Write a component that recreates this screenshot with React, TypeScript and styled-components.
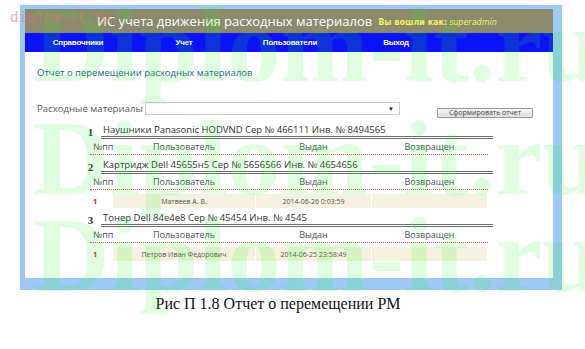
import React from 'react';
import styled, { createGlobalStyle } from 'styled-components';

const GlobalStyle = createGlobalStyle`
  html, body {
    margin: 0;
    padding: 0;
    background: #fff;
    overflow: hidden;
  }
  body {
    font-family: "Open Sans", "Liberation Sans", sans-serif;
  }
`;

const Page = styled.div`
  position: relative;
  width: 585px;
  height: 349px;
  padding-top: 5px;
  box-sizing: border-box;
  overflow: hidden;
`;

const Frame = styled.div`
  margin-left: 20px;
  width: 528px;
  height: 269px;
  border-style: solid;
  border-color: #9dc9f6;
  border-width: 4px 9px 12px 5px;
  background: #fff;
  display: flex;
  flex-direction: column;
`;

const Header = styled.div`
  height: 24px;
  background: #8b8a6c;
  display: flex;
  align-items: center;
  padding-left: 72px;
  gap: 6px;
`;

const Title = styled.h1`
  margin: 0;
  font-family: "Open Sans", sans-serif;
  font-weight: 400;
  font-size: 13px;
  color: #fff;
  white-space: nowrap;
`;

const Login = styled.span`
  font-family: "DejaVu Sans", sans-serif;
  font-size: 8px;
  font-weight: bold;
  color: #f2f25c;
  margin-top: 2px;
  white-space: nowrap;

  em {
    font-weight: normal;
    margin-left: 2px;
  }
`;

const Nav = styled.nav`
  height: 19px;
  background: #0a12f8;
  display: grid;
  grid-template-columns: repeat(4, 106px);
  align-items: center;
`;

const NavItem = styled.span`
  text-align: center;
  font-family: "Liberation Sans", sans-serif;
  font-size: 8px;
  font-weight: bold;
  letter-spacing: -0.2px;
  color: #fff;
`;

const Content = styled.div`
  padding: 15px 12px 0;
`;

const ReportLink = styled.div`
  font-size: 9.5px;
  line-height: 12px;
  color: #236489;
`;

const FilterRow = styled.div`
  margin-top: 23px;
  display: flex;
  align-items: flex-start;
`;

const FilterLabel = styled.span`
  font-size: 9.6px;
  line-height: 13px;
  color: #5a5a5a;
  width: 108px;
  white-space: nowrap;
`;

const Select = styled.div`
  width: 248px;
  height: 11px;
  border: 1px solid #cfcfcf;
  background: #fff;
  display: flex;
  justify-content: flex-end;
  align-items: center;
  padding-right: 5px;
  font-size: 6px;
  color: #222;
`;

const Button = styled.button`
  margin: 6px 0 0 37px;
  width: 96px;
  height: 10px;
  padding: 0;
  border: 1px solid #9a9a9a;
  border-radius: 1px;
  background: linear-gradient(#f6f6f6, #dcdcdc);
  font-family: "Open Sans", sans-serif;
  font-size: 7px;
  line-height: 8px;
  color: #444;
`;

const Groups = styled.div`
  margin-top: 6px;
  padding-left: 43px;
`;

const Group = styled.section`
  margin-top: 4px;
`;

const GroupTitle = styled.div`
  display: flex;
  align-items: flex-end;
`;

const GroupNo = styled.span`
  width: 21px;
  text-align: center;
  font-family: "Liberation Serif", serif;
  font-weight: bold;
  font-size: 11px;
  line-height: 13px;
  color: #333;
`;

const GroupName = styled.div`
  width: 390px;
  padding-left: 2px;
  font-size: 9.5px;
  line-height: 12px;
  color: #333;
  border-bottom: 3px double #6c6c6c;
`;

const Row = styled.div<{ $head?: boolean }>`
  margin-left: 10px;
  width: 398px;
  display: grid;
  grid-template-columns: 22px 142px 115px 115px;
  column-gap: 1px;
  align-items: stretch;
  height: ${(p) => (p.$head ? '15px' : '14px')};
  margin-top: ${(p) => (p.$head ? '0' : '4px')};
  border-bottom: ${(p) => (p.$head ? '1px dotted #e0606a' : 'none')};
`;

const Cell = styled.div<{ $head?: boolean; $first?: boolean }>`
  display: flex;
  align-items: center;
  justify-content: ${(p) => (p.$first ? 'flex-start' : 'center')};
  padding-left: ${(p) => (p.$first ? '3px' : '0')};
  background: ${(p) => (p.$head || p.$first ? 'transparent' : '#f4f2df')};
  font-size: ${(p) => (p.$head ? '9px' : '7px')};
  color: ${(p) => (p.$head ? '#4a5060' : '#555')};
  white-space: nowrap;
`;

const RowNo = styled.span`
  color: #d01818;
  font-weight: bold;
  font-size: 7.5px;
`;

const Caption = styled.p`
  margin: 5px 0 0;
  width: 556px;
  text-align: center;
  font-family: "Liberation Serif", serif;
  font-size: 16px;
  line-height: 18px;
  color: #111;
`;

const Watermark = styled.div<{ $top: number }>`
  position: absolute;
  left: 33px;
  top: ${(p) => p.$top}px;
  font-family: "Liberation Serif", serif;
  font-weight: bold;
  font-size: 106px;
  line-height: 106px;
  white-space: nowrap;
  color: rgba(40, 240, 40, 0.15);
  pointer-events: none;
`;

const Stamp = styled.div`
  position: absolute;
  left: 10px;
  top: 10px;
  font-family: "Liberation Mono", monospace;
  font-size: 14px;
  line-height: 16px;
  color: rgba(225, 110, 130, 0.6);
  pointer-events: none;
`;

interface Move {
  user: string;
  issued: string;
}

interface Item {
  name: string;
  moves: Move[];
}

const items: Item[] = [
  { name: 'Наушники Panasonic HODVND Сер № 466111 Инв. № 8494565', moves: [] },
  {
    name: 'Картридж Dell 45655н5 Сер № 5656566 Инв. № 4654656',
    moves: [{ user: 'Матвеев А. В.', issued: '2014-06-26 0:03:59' }],
  },
  {
    name: 'Тонер Dell 84e4e8 Сер № 45454 Инв. № 4545',
    moves: [{ user: 'Петров Иван Федорович', issued: '2014-06-25 23:58:49' }],
  },
];

export default function App() {
  return (
    <Page>
      <GlobalStyle />
      <Frame>
        <Header>
          <Title>ИС учета движения расходных материалов</Title>
          <Login>
            Вы вошли как:<em>superadmin</em>
          </Login>
        </Header>
        <Nav>
          <NavItem>Справочники</NavItem>
          <NavItem>Учет</NavItem>
          <NavItem>Пользователи</NavItem>
          <NavItem>Выход</NavItem>
        </Nav>
        <Content>
          <ReportLink>Отчет о перемещении расходных материалов</ReportLink>
          <FilterRow>
            <FilterLabel>Расходные материалы</FilterLabel>
            <Select>▼</Select>
            <Button>Сформировать отчет</Button>
          </FilterRow>
          <Groups>
            {items.map((item, i) => (
              <Group key={item.name}>
                <GroupTitle>
                  <GroupNo>{i + 1}</GroupNo>
                  <GroupName>{item.name}</GroupName>
                </GroupTitle>
                <Row $head>
                  <Cell $head $first>№пп</Cell>
                  <Cell $head>Пользователь</Cell>
                  <Cell $head>Выдан</Cell>
                  <Cell $head>Возвращен</Cell>
                </Row>
                {item.moves.map((m, j) => (
                  <Row key={m.issued}>
                    <Cell $first>
                      <RowNo>{j + 1}</RowNo>
                    </Cell>
                    <Cell>{m.user}</Cell>
                    <Cell>{m.issued}</Cell>
                    <Cell />
                  </Row>
                ))}
              </Group>
            ))}
          </Groups>
        </Content>
      </Frame>
      <Caption>Рис П 1.8 Отчет о перемещении РМ</Caption>
      <Watermark $top={-7}>Diplom-it.ru</Watermark>
      <Watermark $top={106}>Diplom-it.ru</Watermark>
      <Watermark $top={203}>Diplom-it.ru</Watermark>
      <Stamp>diplom-it.ru</Stamp>
    </Page>
  );
}
